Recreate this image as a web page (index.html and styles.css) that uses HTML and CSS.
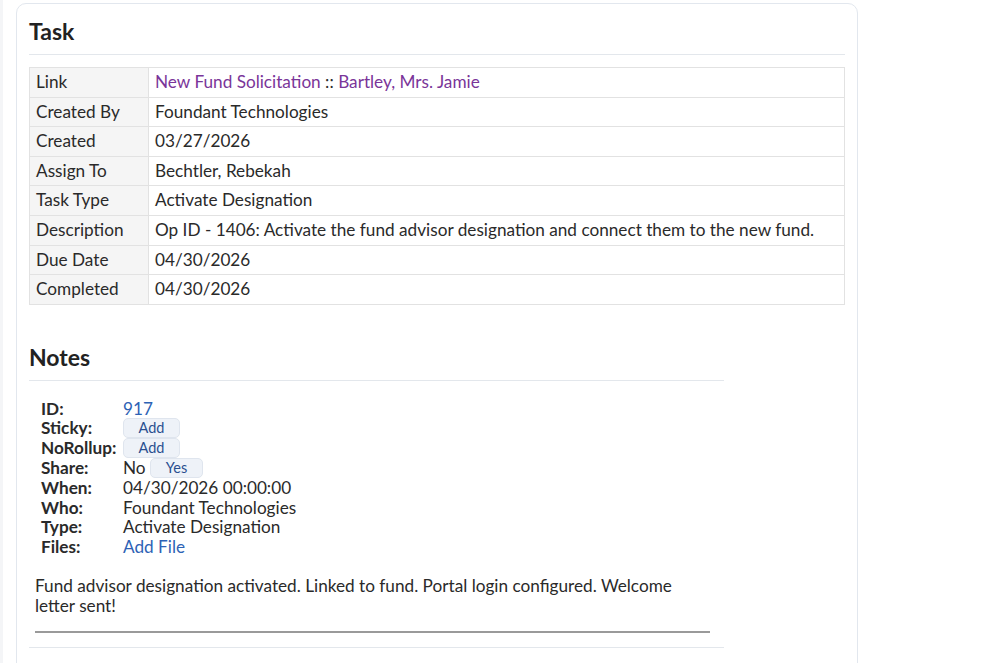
FILE: index.html
```html
<!DOCTYPE html>
<html lang="en">
<head>
  <meta charset="UTF-8">
  <title>Task</title>
  <link rel="stylesheet" href="styles.css">
</head>
<body>
  <div class="page">
    <div class="card">
      <!-- Task details -->
      <h2 class="section-title">Task</h2>
      <hr class="rule">
      <table class="details">
        <tr><th>Link</th><td><a href="#">New Fund Solicitation</a> :: <a href="#">Bartley, Mrs. Jamie</a></td></tr>
        <tr><th>Created By</th><td>Foundant Technologies</td></tr>
        <tr><th>Created</th><td>03/27/2026</td></tr>
        <tr><th>Assign To</th><td>Bechtler, Rebekah</td></tr>
        <tr><th>Task Type</th><td>Activate Designation</td></tr>
        <tr><th>Description</th><td>Op ID - 1406: Activate the fund advisor designation and connect them to the new fund.</td></tr>
        <tr><th>Due Date</th><td>04/30/2026</td></tr>
        <tr><th>Completed</th><td>04/30/2026</td></tr>
      </table>

      <!-- Notes -->
      <div class="notes">
        <h2 class="section-title">Notes</h2>
        <hr class="rule">
        <div class="note">
          <dl class="note-meta">
            <dt>ID:</dt><dd><a class="blue" href="#">917</a></dd>
            <dt>Sticky:</dt><dd><button class="pill">Add</button></dd>
            <dt>NoRollup:</dt><dd><button class="pill">Add</button></dd>
            <dt>Share:</dt><dd>No <button class="pill pill-sm">Yes</button></dd>
            <dt>When:</dt><dd>04/30/2026 00:00:00</dd>
            <dt>Who:</dt><dd>Foundant Technologies</dd>
            <dt>Type:</dt><dd>Activate Designation</dd>
            <dt>Files:</dt><dd><a class="blue" href="#">Add File</a></dd>
          </dl>
          <p class="note-text">Fund advisor designation activated. Linked to fund. Portal login configured. Welcome letter sent!</p>
          <hr class="note-end">
        </div>
        <hr class="rule rule-end">
      </div>
    </div>
  </div>
</body>
</html>
```

FILE: styles.css
```css
body {
  margin: 0;
  font-family: Lato, "Noto Sans", sans-serif;
  font-size: 17.2px;
  color: #2a2a2a;
  background-color: #fff;
}
.page {
  border-left: 3px solid #f4f5f7;
  padding: 3px 0 0 13px;
  height: 660px;
  overflow: hidden;
}
.card {
  width: 816px;
  min-height: 700px;
  padding: 0 12px;
  border: 1px solid #e2e7ee;
  border-radius: 10px;
}
.section-title {
  margin: 0;
  padding-top: 14px;
  font-size: 23px;
  line-height: 26px;
  font-weight: 700;
  color: #222;
}
.rule {
  border: 0;
  border-top: 1px solid #e3e7ec;
  margin: 10px 0 12px;
}
.rule-end {
  margin-top: 14px;
}
.details {
  width: 100%;
  border-collapse: collapse;
}
.details th,
.details td {
  border: 1px solid #e2e2e2;
  padding: 4px 6px;
  line-height: 20.6px;
  text-align: left;
  font-weight: 400;
}
.details th {
  width: 106px;
  background-color: #f5f5f5;
}
.details a {
  color: #7a3599;
  text-decoration: none;
}
.notes {
  width: 695px;
  margin-top: 25px;
}
.note {
  padding: 6px 14px 0 6px;
}
.note-meta {
  display: grid;
  grid-template-columns: 82px 1fr;
  margin: 0 0 0 6px;
  line-height: 19.5px;
}
.note-meta dt {
  font-weight: 700;
}
.note-meta dd {
  margin: 0;
}
.blue {
  color: #2d62b5;
  text-decoration: none;
}
.pill {
  display: inline-block;
  vertical-align: top;
  height: 20px;
  width: 57px;
  padding: 0;
  font-family: inherit;
  font-size: 14.5px;
  line-height: 18px;
  color: #2a4f8f;
  background-color: #eef2f8;
  border: 1px solid #dfe5ee;
  border-radius: 5px;
}
.pill-sm {
  width: 53px;
}
.note-text {
  margin: 20px 0 16px;
  line-height: 19.5px;
}
.note-end {
  border: 0;
  border-top: 2px solid #9a9a9a;
  margin: 0;
}
```
